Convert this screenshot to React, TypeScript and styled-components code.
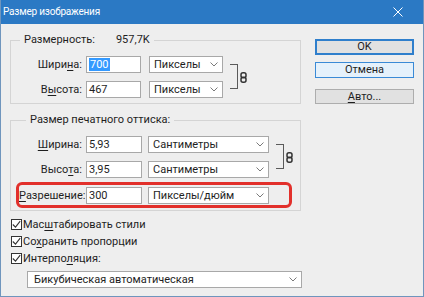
import React from "react";
import styled, { createGlobalStyle } from "styled-components";

const Global = createGlobalStyle`
  html, body { margin: 0; padding: 0; background: #eeeeee; }
  body { font-family: Roboto, "Liberation Sans", sans-serif; font-size: 11px; color: #1e1e1e; }
  * { box-sizing: border-box; }
`;

const Window = styled.div`
  width: 424px;
  height: 297px;
  background: #eeeeee;
  border: 1px solid #6f95bd;
  border-top: none;
  display: flex;
  flex-direction: column;
  overflow: hidden;
`;

const TitleBar = styled.div`
  height: 24px;
  margin: 0 -1px;
  background: #2b79c4;
  color: #ffffff;
  display: flex;
  align-items: center;
  justify-content: space-between;
  padding: 0 21px 1px 3px;
  font-size: 10px;
  letter-spacing: -0.2px;
  flex-shrink: 0;
`;

const Body = styled.div`
  display: flex;
  padding: 16px 0 0 9px;
  gap: 14px;
`;

const LeftCol = styled.div`
  width: 291px;
  display: flex;
  flex-direction: column;
`;

const RightCol = styled.div`
  width: 99px;
  margin-top: -1px;
  display: flex;
  flex-direction: column;
`;

const Group = styled.div<{ $mb?: number; $pb: number }>`
  border: 1px solid #d4d4d4;
  padding-bottom: ${(p) => p.$pb}px;
  margin-bottom: ${(p) => p.$mb ?? 0}px;
`;

const Legend = styled.div<{ $ml: number }>`
  display: flex;
  width: fit-content;
  margin: -9px 0 0 ${(p) => p.$ml}px;
  padding: 0 4px;
  line-height: 16px;
  height: 16px;
  background: #eeeeee;
  white-space: nowrap;
`;

const LegendValue = styled.span`
  margin-left: 21px;
`;

const Linked = styled.div`
  display: flex;
  margin-top: 8px;
`;

const Rows = styled.div`
  display: flex;
  flex-direction: column;
  gap: 8px;
`;

const Row = styled.div`
  display: flex;
  align-items: center;
  height: 17px;
`;

const Label = styled.span<{ $w: number }>`
  width: ${(p) => p.$w}px;
  text-align: right;
  white-space: nowrap;
  line-height: 17px;
`;

const U = styled.span`
  text-decoration: underline;
  text-underline-offset: 2px;
`;

const Input = styled.div<{ $w: number }>`
  width: ${(p) => p.$w}px;
  height: 17px;
  margin-left: 4px;
  background: #ffffff;
  border: 1px solid #a8a8a8;
  padding-left: 2px;
  line-height: 15px;
  white-space: nowrap;
`;

const Selected = styled.span`
  background: #3399ff;
  color: #ffffff;
  padding: 0 1px;
`;

const Select = styled.div<{ $w: number; $ml: number }>`
  width: ${(p) => p.$w}px;
  height: 17px;
  margin-left: ${(p) => p.$ml}px;
  background: #ffffff;
  border: 1px solid #a8a8a8;
  display: flex;
  align-items: center;
  justify-content: space-between;
  padding: 0 4px 0 4px;
  line-height: 15px;
  white-space: nowrap;
`;

const Bracket = styled.div`
  width: 8px;
  height: 25px;
  margin: 8px 0 0 7px;
  border: 1px solid #5a5a5a;
  border-left: none;
`;

const ChainBox = styled.div`
  align-self: center;
  margin-left: 2px;
  display: flex;
`;

const Highlight = styled.div`
  margin: 4px 8px 0 5px;
  border: 3px solid #e2302b;
  border-radius: 6px;
  padding: 2px 0 1px 0;
`;

const Checks = styled.div`
  margin-top: 5px;
  display: flex;
  flex-direction: column;
`;

const CheckRow = styled.div`
  display: flex;
  align-items: center;
  height: 17px;
  padding-left: 1px;
`;

const Box = styled.div`
  width: 11px;
  height: 11px;
  border: 1px solid #333333;
  background: #ffffff;
  display: flex;
  align-items: center;
  justify-content: center;
  margin-right: 1px;
`;

const BottomSelect = styled(Select)`
  margin-top: 4px;
  padding-left: 6px;
`;

const Button = styled.div<{ $kind: "default" | "hover" | "normal"; $mt: number; $h: number }>`
  height: ${(p) => p.$h}px;
  margin-top: ${(p) => p.$mt}px;
  display: flex;
  align-items: center;
  justify-content: center;
  line-height: 14px;
  color: #1e1e1e;
  background: ${(p) => (p.$kind === "hover" ? "#e5f1fb" : "#e1e1e1")};
  border: ${(p) =>
    p.$kind === "default"
      ? "2px solid #2f7fcc"
      : p.$kind === "hover"
      ? "1px solid #3a8ad6"
      : "1px solid #adadad"};
`;

const Chevron = () => (
  <svg width="8" height="5" viewBox="0 0 8 5">
    <path d="M0.5 0.5 L4 4 L7.5 0.5" fill="none" stroke="#7a7a7a" strokeWidth="1" />
  </svg>
);

const Chain = () => (
  <svg width="7" height="11" viewBox="0 0 7 11">
    <rect x="1" y="0.75" width="5" height="5" rx="2" fill="none" stroke="#333" strokeWidth="1.5" />
    <rect x="1" y="5.25" width="5" height="5" rx="2" fill="none" stroke="#333" strokeWidth="1.5" />
  </svg>
);

const Check = () => (
  <svg width="9" height="9" viewBox="0 0 9 9">
    <path d="M0.8 4.5 L3.5 7.2 L8.2 1.2" fill="none" stroke="#333" strokeWidth="1.1" />
  </svg>
);

const Close = () => (
  <svg width="10" height="10" viewBox="0 0 10 10">
    <path d="M0.5 0.5 L9.5 9.5 M9.5 0.5 L0.5 9.5" stroke="#ffffff" strokeWidth="1" />
  </svg>
);

export default function App() {
  return (
    <>
      <Global />
      <Window>
        <TitleBar>
          <span>Размер изображения</span>
          <Close />
        </TitleBar>
        <Body>
          <LeftCol>
            <Group $pb={5} $mb={16}>
              <Legend $ml={9}>
                <span>Размерность:</span>
                <LegendValue>957,7K</LegendValue>
              </Legend>
              <Linked>
                <Rows>
                  <Row>
                    <Label $w={71}>
                      Шири<U>н</U>а:
                    </Label>
                    <Input $w={55}>
                      <Selected>700</Selected>
                    </Input>
                    <Select $w={74} $ml={8}>
                      <span>Пикселы</span>
                      <Chevron />
                    </Select>
                  </Row>
                  <Row>
                    <Label $w={71}>
                      В<U>ы</U>сота:
                    </Label>
                    <Input $w={55}>467</Input>
                    <Select $w={74} $ml={8}>
                      <span>Пикселы</span>
                      <Chevron />
                    </Select>
                  </Row>
                </Rows>
                <Bracket />
                <ChainBox>
                  <Chain />
                </ChainBox>
              </Linked>
            </Group>
            <Group $pb={2}>
              <Legend $ml={15}>
                <span>Размер печатного оттиска:</span>
              </Legend>
              <Linked>
                <Rows>
                  <Row>
                    <Label $w={71}>
                      <U>Ш</U>ирина:
                    </Label>
                    <Input $w={56}>5,93</Input>
                    <Select $w={121} $ml={6}>
                      <span>Сантиметры</span>
                      <Chevron />
                    </Select>
                  </Row>
                  <Row>
                    <Label $w={71}>
                      Высо<U>т</U>а:
                    </Label>
                    <Input $w={56}>3,95</Input>
                    <Select $w={121} $ml={6}>
                      <span>Сантиметры</span>
                      <Chevron />
                    </Select>
                  </Row>
                </Rows>
                <Bracket />
                <ChainBox>
                  <Chain />
                </ChainBox>
              </Linked>
              <Highlight>
                <Row>
                  <Label $w={63}>
                    <U>Р</U>азрешение:
                  </Label>
                  <Input $w={56}>300</Input>
                  <Select $w={121} $ml={6}>
                    <span>Пикселы/дюйм</span>
                    <Chevron />
                  </Select>
                </Row>
              </Highlight>
            </Group>
            <Checks>
              <CheckRow>
                <Box>
                  <Check />
                </Box>
                <span>
                  Мас<U>ш</U>табировать стили
                </span>
              </CheckRow>
              <CheckRow>
                <Box>
                  <Check />
                </Box>
                <span>
                  Со<U>х</U>ранить пропорции
                </span>
              </CheckRow>
              <CheckRow>
                <Box>
                  <Check />
                </Box>
                <span>
                  Интерпо<U>л</U>яция:
                </span>
              </CheckRow>
            </Checks>
            <BottomSelect $w={275} $ml={17}>
              <span>Бикубическая автоматическая</span>
              <Chevron />
            </BottomSelect>
          </LeftCol>
          <RightCol>
            <Button $kind="default" $mt={0} $h={16}>
              OK
            </Button>
            <Button $kind="hover" $mt={7} $h={16}>
              Отмена
            </Button>
            <Button $kind="normal" $mt={11} $h={15}>
              <span>
                <U>А</U>вто...
              </span>
            </Button>
          </RightCol>
        </Body>
      </Window>
    </>
  );
}
